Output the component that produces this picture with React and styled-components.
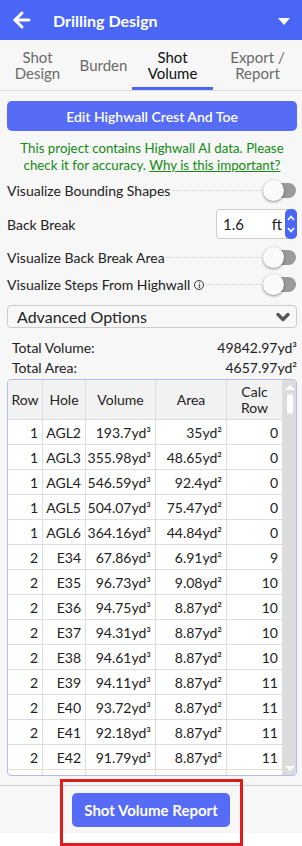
import styled, { createGlobalStyle } from 'styled-components';
import { ArrowLeft, ChevronDown } from 'lucide-react';

const GlobalStyle = createGlobalStyle`
    * { box-sizing: border-box; }
    body {
        margin: 0;
        font-family: Lato, "Open Sans", sans-serif;
        background: #ffffff;
        color: #222222;
    }
`;

const tabs = [
    { label: ['Shot', 'Design'], width: 75 },
    { label: ['Burden'], width: 57 },
    { label: ['Shot', 'Volume'], width: 81, active: true },
    { label: ['Export /', 'Report'], width: 89 },
];

const rows = [
    ['1', 'AGL2', '193.7', '35', '0'],
    ['1', 'AGL3', '355.98', '48.65', '0'],
    ['1', 'AGL4', '546.59', '92.4', '0'],
    ['1', 'AGL5', '504.07', '75.47', '0'],
    ['1', 'AGL6', '364.16', '44.84', '0'],
    ['2', 'E34', '67.86', '6.91', '9'],
    ['2', 'E35', '96.73', '9.08', '10'],
    ['2', 'E36', '94.75', '8.87', '10'],
    ['2', 'E37', '94.31', '8.87', '10'],
    ['2', 'E38', '94.61', '8.87', '10'],
    ['2', 'E39', '94.11', '8.87', '11'],
    ['2', 'E40', '93.72', '8.87', '11'],
    ['2', 'E41', '92.18', '8.87', '11'],
    ['2', 'E42', '91.79', '8.87', '11'],
    ['2', 'E43', '91.40', '8.87', '11'],
];

const columns = '35px 43px 70px 71px 56px';

const Toggle = () => (
    <Switch>
        <SwitchKnob />
    </Switch>
);

const OptionRow = ({ label, info }) => (
    <Row>
        <RowLabel>
            {label}
            {info && <InfoIcon>i</InfoIcon>}
        </RowLabel>
        <Leader />
        <Toggle />
    </Row>
);

const App = () => {
    return (
        <Page>
            <GlobalStyle />
            <Header>
                <ArrowLeft color="white" size={24} strokeWidth={3} />
                <Title>Drilling Design</Title>
                <Caret />
            </Header>
            <Tabs>
                {tabs.map((tab, index) => (
                    <Tab key={index} $width={tab.width} $active={tab.active}>
                        {tab.label.map((line) => <span key={line}>{line}</span>)}
                    </Tab>
                ))}
            </Tabs>
            <Content>
                <EditButton>Edit Highwall Crest And Toe</EditButton>
                <Notice>
                    This project contains Highwall AI data. Please check it for accuracy.{' '}
                    <NoticeLink>Why is this important?</NoticeLink>
                </Notice>
                <Options>
                    <OptionRow label="Visualize Bounding Shapes" />
                    <InputRow>
                        <RowLabel>Back Break</RowLabel>
                        <NumberBox>
                            <NumberValue>1.6</NumberValue>
                            <Unit>ft</Unit>
                            <Spinner>
                                <svg width="10" height="26" viewBox="0 0 10 26">
                                    <path d="M2 9 L5 5.5 L8 9" fill="none" stroke="white" strokeWidth="1.6" />
                                    <path d="M2 17 L5 20.5 L8 17" fill="none" stroke="white" strokeWidth="1.6" />
                                </svg>
                            </Spinner>
                        </NumberBox>
                    </InputRow>
                    <OptionRow label="Visualize Back Break Area" />
                    <OptionRow label="Visualize Steps From Highwall" info />
                </Options>
                <Advanced>
                    <span>Advanced Options</span>
                    <ChevronDown size={20} strokeWidth={4} color="#555" />
                </Advanced>
                <Totals>
                    <TotalRow><span>Total Volume:</span><span>49842.97yd³</span></TotalRow>
                    <TotalRow><span>Total Area:</span><span>4657.97yd²</span></TotalRow>
                </Totals>
                <TableFrame>
                    <TableBody>
                        <HeadRow>
                            <HeadCell>Row</HeadCell>
                            <HeadCell>Hole</HeadCell>
                            <HeadCell>Volume</HeadCell>
                            <HeadCell>Area</HeadCell>
                            <HeadCell>Calc<br />Row</HeadCell>
                        </HeadRow>
                        {rows.map((row) => (
                            <DataRow key={row[1]}>
                                <Cell>{row[0]}</Cell>
                                <Cell>{row[1]}</Cell>
                                <Cell>{row[2]}yd³</Cell>
                                <Cell>{row[3]}yd²</Cell>
                                <Cell>{row[4]}</Cell>
                            </DataRow>
                        ))}
                    </TableBody>
                    <ScrollTrack>
                        <ScrollArrow $up />
                        <ScrollThumb />
                        <ScrollSpace />
                        <ScrollArrow />
                    </ScrollTrack>
                </TableFrame>
            </Content>
            <Footer>
                <ReportButton>Shot Volume Report</ReportButton>
                <Highlight />
            </Footer>
            <BottomSpace />
        </Page>
    );
};

const Page = styled.div`
    width: 302px;
    height: 846px;
    display: flex;
    flex-direction: column;
    background: #f7f7f7;
    overflow: hidden;
`;

const Header = styled.div`
    height: 40px;
    flex-shrink: 0;
    background: #4a66f6;
    display: flex;
    align-items: center;
    padding: 0 12px 0 10px;
`;

const Title = styled.div`
    flex: 1;
    margin-left: 19px;
    color: white;
    font-size: 16px;
    font-weight: 700;
`;

const Caret = styled.div`
    width: 0;
    height: 0;
    border-left: 6px solid transparent;
    border-right: 6px solid transparent;
    border-top: 7px solid white;
    margin-top: 2px;
`;

const Tabs = styled.div`
    height: 51px;
    flex-shrink: 0;
    display: flex;
    border-bottom: 1px solid #dcdcdc;
    background: #f7f7f7;
`;

const Tab = styled.div`
    width: ${(p) => p.$width}px;
    display: flex;
    flex-direction: column;
    align-items: center;
    justify-content: center;
    font-size: 15px;
    line-height: 16px;
    color: ${(p) => (p.$active ? '#111' : '#6a6a6a')};
    border-bottom: 3px solid ${(p) => (p.$active ? '#4a66f6' : 'transparent')};
    padding-top: 3px;
`;

const Content = styled.div`
    flex: 1;
    min-height: 0;
    display: flex;
    flex-direction: column;
    padding: 10px 5px 0 7px;
`;

const EditButton = styled.button`
    height: 30px;
    flex-shrink: 0;
    border: none;
    border-radius: 5px;
    background: #566cf7;
    color: white;
    font-family: Lato, sans-serif;
    font-size: 14px;
    font-weight: 600;
`;

const Notice = styled.div`
    margin-top: 9px;
    color: #138a13;
    font-size: 13.3px;
    line-height: 17px;
    text-align: center;
`;

const NoticeLink = styled.span`
    text-decoration: underline;
`;

const Options = styled.div`
    margin-top: 3px;
    display: flex;
    flex-direction: column;
    flex-shrink: 0;
`;

const Row = styled.div`
    height: 27px;
    display: flex;
    align-items: center;
`;

const InputRow = styled(Row)`
    height: 40px;
    justify-content: space-between;
`;

const RowLabel = styled.div`
    font-size: 14px;
    color: #222;
    display: flex;
    align-items: center;
`;

const InfoIcon = styled.span`
    width: 10px;
    height: 10px;
    margin-left: 4px;
    border: 1px solid #333;
    border-radius: 50%;
    font-size: 7px;
    line-height: 8px;
    text-align: center;
    font-weight: 700;
`;

const Leader = styled.div`
    flex: 1;
    height: 0;
    border-top: 1px dotted #cfcfcf;
    margin: 0 6px 0 2px;
`;

const Switch = styled.div`
    width: 29px;
    height: 15px;
    border-radius: 8px;
    background: #9a9a9a;
    position: relative;
    margin-right: 1px;
`;

const SwitchKnob = styled.div`
    position: absolute;
    left: -4px;
    top: -3px;
    width: 21px;
    height: 21px;
    border-radius: 50%;
    background: #fafafa;
    box-shadow: 0 1px 3px rgba(0, 0, 0, 0.45);
`;

const NumberBox = styled.div`
    width: 81px;
    height: 30px;
    border: 1px solid #cccccc;
    border-radius: 4px;
    background: white;
    display: flex;
    align-items: center;
    padding-left: 6px;
`;

const NumberValue = styled.span`
    flex: 1;
    font-size: 15px;
`;

const Unit = styled.span`
    font-size: 15px;
    margin-right: 3px;
`;

const Spinner = styled.div`
    width: 12px;
    height: 30px;
    margin-right: -1px;
    border-radius: 5px;
    background: #4a66f6;
    display: flex;
    align-items: center;
    justify-content: center;
`;

const Advanced = styled.div`
    margin-top: 7px;
    height: 23px;
    flex-shrink: 0;
    border: 1px solid #cccccc;
    border-radius: 4px;
    display: flex;
    align-items: center;
    justify-content: space-between;
    padding: 0 3px 0 9px;
    font-size: 16px;
    color: #222;
`;

const Totals = styled.div`
    margin-top: 9px;
    padding: 0 0 0 5px;
    flex-shrink: 0;
`;

const TotalRow = styled.div`
    height: 20px;
    display: flex;
    justify-content: space-between;
    align-items: center;
    font-size: 14px;
    color: #222;
`;

const TableFrame = styled.div`
    margin-top: 2px;
    flex: 1;
    min-height: 0;
    border: 1px solid #b3bcec;
    border-radius: 4px;
    display: flex;
    overflow: hidden;
    background: white;
`;

const TableBody = styled.div`
    flex: 1;
    display: flex;
    flex-direction: column;
    overflow: hidden;
`;

const HeadRow = styled.div`
    display: grid;
    grid-template-columns: ${columns};
    height: 40px;
    flex-shrink: 0;
    background: #f2f2f2;
    border-bottom: 1px solid #dddddd;
`;

const HeadCell = styled.div`
    display: flex;
    align-items: center;
    justify-content: center;
    text-align: center;
    font-size: 14px;
    line-height: 16px;
    color: #222;
    border-right: 1px solid #dddddd;
`;

const DataRow = styled.div`
    display: grid;
    grid-template-columns: ${columns};
    height: 25px;
    flex-shrink: 0;
    border-bottom: 1px solid #dddddd;
`;

const Cell = styled.div`
    display: flex;
    align-items: center;
    justify-content: flex-end;
    padding-right: 4px;
    font-size: 14px;
    color: #222;
    border-right: 1px solid #dddddd;
    white-space: nowrap;
`;

const ScrollTrack = styled.div`
    width: 13px;
    background: #dcdcdc;
    display: flex;
    flex-direction: column;
    align-items: center;
    padding: 5px 0 4px;
`;

const ScrollArrow = styled.div`
    width: 0;
    height: 0;
    border-left: 5px solid transparent;
    border-right: 5px solid transparent;
    ${(p) => (p.$up ? 'border-bottom: 5px solid white;' : 'border-top: 5px solid white;')}
`;

const ScrollThumb = styled.div`
    margin-top: 4px;
    width: 6px;
    height: 20px;
    border-radius: 3px;
    background: white;
`;

const ScrollSpace = styled.div`
    flex: 1;
`;

const Footer = styled.div`
    position: relative;
    height: 48px;
    flex-shrink: 0;
    border-top: 1px solid #cfcfcf;
    display: flex;
    align-items: center;
    justify-content: center;
    background: #f7f7f7;
    margin-top: 9px;
`;

const ReportButton = styled.button`
    width: 158px;
    height: 34px;
    border: none;
    border-radius: 5px;
    background: #566cf7;
    color: white;
    font-family: Lato, sans-serif;
    font-size: 15px;
    font-weight: 700;
`;

const Highlight = styled.div`
    position: absolute;
    left: 60px;
    top: -7px;
    width: 183px;
    height: 67px;
    border: 3px solid #e21c1c;
`;

const BottomSpace = styled.div`
    height: 13px;
    flex-shrink: 0;
    background: white;
`;

export default App;
